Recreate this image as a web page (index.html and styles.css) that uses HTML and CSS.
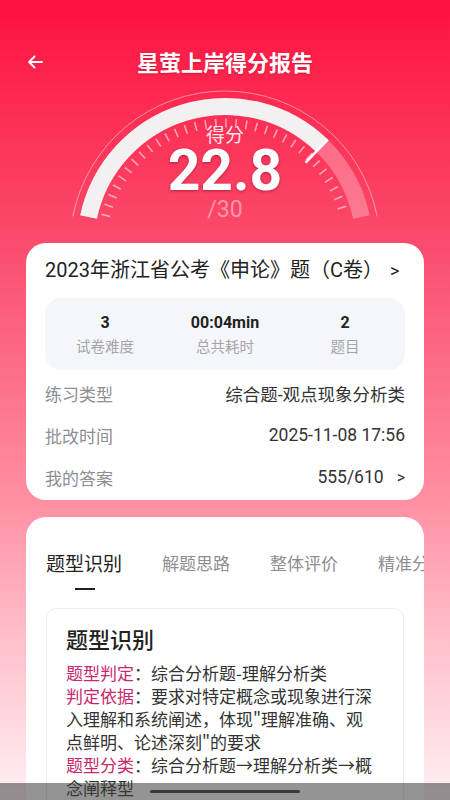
FILE: index.html
```html
<!DOCTYPE html>
<html lang="zh-CN">
<head>
    <meta charset="UTF-8">
    <meta name="viewport" content="width=device-width, initial-scale=1.0">
    <title>星萤上岸得分报告</title>
    <link rel="stylesheet" href="styles.css">
</head>
<body>
    <div class="header">
        <svg class="back-icon" width="16" height="14" viewBox="0 0 16 14">
            <path d="M15 7H2M7.5 1.5L2 7l5.5 5.5" fill="none" stroke="#fff" stroke-width="1.8" stroke-linecap="round" stroke-linejoin="round"/>
        </svg>
        <h1 class="header-title">星萤上岸得分报告</h1>
    </div>

    <div class="gauge">
        <svg class="gauge-ring" width="450" height="155" viewBox="0 0 450 155">
            <!-- thin outer line -->
            <path d="M72.85 128.43A155 155 0 0 1 377.15 128.43" fill="none" stroke="rgba(255,255,255,0.45)" stroke-width="1"/>
            <!-- full track -->
            <path d="M88.55 129A139.5 139.5 0 0 1 361.45 129" fill="none" stroke="rgba(255,255,255,0.28)" stroke-width="17"/>
            <!-- score part: 22.8 / 30 -->
            <path d="M88.55 129A139.5 139.5 0 0 1 321.91 57.65" fill="none" stroke="#f2f0f1" stroke-width="17"/>
            <!-- ticks -->
            <path d="M105.65 128.24A123 123 0 0 1 344.35 128.24" fill="none" stroke="rgba(255,255,255,0.55)" stroke-width="9" stroke-dasharray="1.6 8.597"/>
            <line x1="305.58" y1="74.56" x2="327.81" y2="51.54" stroke="#fff" stroke-width="2.5"/>
        </svg>
        <div class="gauge-text">
            <div class="gauge-label">得分</div>
            <div class="gauge-score">22.8</div>
            <div class="gauge-total">/30</div>
        </div>
    </div>

    <div class="card summary-card">
        <div class="paper-title">2023年浙江省公考《申论》题（C卷）<span class="arrow">&gt;</span></div>
        <div class="stats">
            <div class="stat">
                <div class="stat-value">3</div>
                <div class="stat-label">试卷难度</div>
            </div>
            <div class="stat">
                <div class="stat-value">00:04min</div>
                <div class="stat-label">总共耗时</div>
            </div>
            <div class="stat">
                <div class="stat-value">2</div>
                <div class="stat-label">题目</div>
            </div>
        </div>
        <div class="info-row first">
            <span class="info-label">练习类型</span>
            <span class="info-value">综合题-观点现象分析类</span>
        </div>
        <div class="info-row">
            <span class="info-label">批改时间</span>
            <span class="info-value">2025-11-08 17:56</span>
        </div>
        <div class="info-row">
            <span class="info-label">我的答案</span>
            <span class="info-value">555/610<span class="arrow">&gt;</span></span>
        </div>
    </div>

    <div class="card detail-card">
        <div class="tabs">
            <span class="tab active">题型识别</span>
            <span class="tab">解题思路</span>
            <span class="tab">整体评价</span>
            <span class="tab">精准分析</span>
        </div>
        <div class="tab-indicator"></div>
        <div class="detail-box">
            <h2 class="detail-title">题型识别</h2>
            <p class="detail-text"><span class="key">题型判定</span>：综合分析题-理解分析类<br><span class="key">判定依据</span>：要求对特定概念或现象进行深入理解和系统阐述，体现"理解准确、观点鲜明、论述深刻"的要求<br><span class="key">题型分类</span>：综合分析题→理解分析类→概念阐释型</p>
        </div>
    </div>

    <div class="nav-bar"><div class="nav-handle"></div></div>
</body>
</html>
```

FILE: styles.css
```css
body {
    margin: 0;
    width: 450px;
    height: 800px;
    overflow: hidden;
    background: linear-gradient(180deg, #fe1040 0%, #fc2f55 15%, #fa4b6c 30%, #ff8ea2 62%, #ffbfcb 80%, #fff0f3 100%);
    font-family: Roboto, "Noto Sans CJK SC", sans-serif;
    color: #333;
}
.header {
    display: flex;
    align-items: center;
    justify-content: center;
    position: relative;
    height: 38px;
    padding-top: 42px;
    padding-bottom: 8px;
}
.back-icon {
    position: absolute;
    left: 27px;
    top: 55px;
}
.header-title {
    margin: 0;
    font-size: 22px;
    font-weight: 700;
    color: #fff;
    font-family: "Noto Sans CJK SC", sans-serif;
    text-shadow: 0 1px 2px rgba(120, 0, 20, 0.35);
}
.gauge {
    position: relative;
    height: 155px;
}
.gauge-ring {
    position: absolute;
    left: 0;
    top: 0;
}
.gauge-text {
    position: relative;
    display: flex;
    flex-direction: column;
    align-items: center;
    padding-top: 35px;
}
.gauge-label {
    font-size: 19px;
    line-height: 22px;
    color: rgba(255, 255, 255, 0.88);
    font-family: "Noto Sans CJK SC", sans-serif;
}
.gauge-score {
    font-size: 57px;
    line-height: 52px;
    font-weight: 700;
    color: #fff;
    text-shadow: 0 1px 3px rgba(90, 0, 20, 0.45);
}
.gauge-total {
    font-size: 23px;
    line-height: 26px;
    color: rgba(255, 255, 255, 0.45);
}
.card {
    margin: 0 26px;
    background-color: #ffffff;
    border-radius: 20px;
}
.summary-card {
    padding: 16px 19px 2px;
}
.paper-title {
    font-size: 20px;
    line-height: 22px;
    color: #222;
    white-space: nowrap;
}
.paper-title .arrow {
    margin-left: 7px;
    font-size: 18px;
}
.stats {
    display: grid;
    grid-template-columns: 1fr 1fr 1fr;
    margin-top: 16px;
    padding: 14px 0 11px;
    background-color: #f5f6fa;
    border-radius: 16px;
    text-align: center;
}
.stat-value {
    font-size: 16px;
    line-height: 22px;
    font-weight: 700;
    color: #222;
}
.stat-label {
    margin-top: 3px;
    font-size: 14.5px;
    line-height: 22px;
    color: #a5a5a9;
}
.info-row {
    display: flex;
    justify-content: space-between;
    align-items: center;
    height: 42px;
    font-size: 17px;
}
.info-row.first {
    margin-top: 2px;
}
.info-label {
    color: #8e8e93;
}
.info-value {
    font-size: 17.5px;
    color: #333;
}
.info-value .arrow {
    margin-left: 13px;
    font-size: 16px;
}
.detail-card {
    margin-top: 17px;
    padding: 32px 0 0 20px;
    overflow: hidden;
}
.tabs {
    display: flex;
    align-items: center;
    gap: 40px;
    white-space: nowrap;
    height: 26px;
    font-family: "Noto Sans CJK SC", sans-serif;
}
.tab {
    font-size: 17px;
    color: #8e8e93;
}
.tab.active {
    font-size: 19px;
    color: #222;
}
.tab-indicator {
    width: 20px;
    height: 2px;
    margin: 13px 0 0 29px;
    background-color: #222;
}
.detail-box {
    margin: 18px 20px 0 0;
    padding: 16px 28px 30px 19px;
    border: 1px solid #ececec;
    border-radius: 10px;
}
.detail-title {
    margin: 0;
    font-size: 22px;
    line-height: 26px;
    font-weight: 500;
    color: #222;
    font-family: "Noto Sans CJK SC", sans-serif;
}
.detail-text {
    margin: 10px 0 0;
    font-size: 17px;
    line-height: 23px;
    color: #333;
    font-family: "Noto Sans CJK SC", sans-serif;
}
.key {
    color: #c8296e;
}
.nav-bar {
    position: fixed;
    left: 0;
    right: 0;
    bottom: 0;
    height: 17px;
    display: flex;
    align-items: center;
    justify-content: center;
    background-color: rgba(60, 60, 60, 0.55);
}
.nav-handle {
    width: 150px;
    height: 3px;
    border-radius: 2px;
    background-color: #3a3a3a;
}
```
